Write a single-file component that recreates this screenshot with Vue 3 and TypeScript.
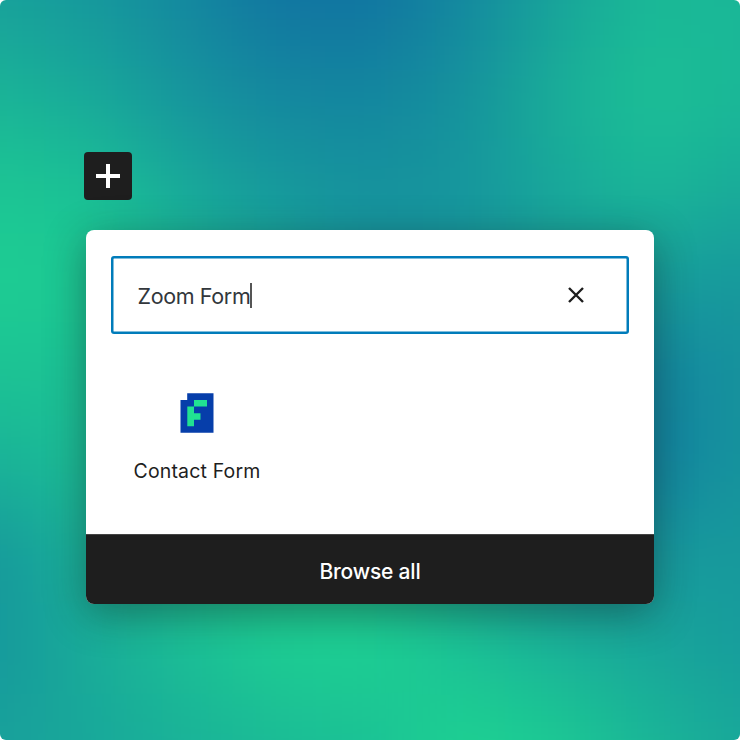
<script setup lang="ts">
import { ref } from 'vue'

type Rgb = [number, number, number]

const query = ref('Zoom Form')

// Backdrop tones on a 9 x 9 lattice: 0 is blue, 0.5 is teal, 1 is green.
const tones: number[][] = [
  [0.56, 0.46, 0.28, 0.06, 0.05, 0.28, 0.58, 0.78, 0.75],
  [0.74, 0.62, 0.42, 0.27, 0.24, 0.38, 0.68, 0.85, 0.77],
  [0.9, 0.85, 0.62, 0.46, 0.4, 0.44, 0.62, 0.77, 0.66],
  [0.97, 0.95, 0.78, 0.6, 0.42, 0.44, 0.53, 0.54, 0.48],
  [0.88, 0.87, 0.75, 0.6, 0.4, 0.3, 0.27, 0.22, 0.4],
  [0.72, 0.84, 0.78, 0.7, 0.6, 0.4, 0.27, 0.17, 0.42],
  [0.46, 0.72, 0.85, 0.92, 0.9, 0.7, 0.5, 0.47, 0.48],
  [0.46, 0.66, 0.83, 0.98, 1.0, 0.86, 0.72, 0.6, 0.52],
  [0.56, 0.62, 0.72, 0.8, 0.86, 1.02, 0.94, 0.76, 0.62],
]

const stops: Rgb[] = [
  [16, 112, 162],
  [23, 155, 156],
  [29, 208, 146],
]

function shade(tone: number): string {
  const index = tone < 0.5 ? 0 : 1
  const part = (tone - index * 0.5) * 2
  const from = stops[index]
  const to = stops[index + 1]
  const channels = from.map((value, i) => Math.round(value + (to[i] - value) * part))
  return `rgb(${channels.join(',')})`
}

const step = 92.5
// Edge tones repeat outwards so that the blur has colour beyond the frame.
const cells = Array.from({ length: 169 }, (_, n) => {
  const column = (n % 13) - 2
  const row = Math.floor(n / 13) - 2
  const clamp = (value: number) => Math.min(8, Math.max(0, value))
  return {
    x: (column - 0.5) * step,
    y: (row - 0.5) * step,
    fill: shade(tones[clamp(row)][clamp(column)]),
  }
})
</script>

<template>
  <main class="scene">
    <svg class="backdrop" viewBox="0 0 740 740" aria-hidden="true">
      <defs>
        <filter id="soften" filterUnits="userSpaceOnUse" x="-240" y="-240" width="1220" height="1220" color-interpolation-filters="sRGB">
          <feGaussianBlur stdDeviation="42" />
        </filter>
      </defs>
      <g filter="url(#soften)">
        <rect v-for="(cell, i) in cells" :key="i" :x="cell.x" :y="cell.y" width="93.5" height="93.5" :fill="cell.fill" />
      </g>
    </svg>

    <div class="content">
      <button class="add" type="button">
        <svg width="24" height="24" viewBox="0 0 24 24"><path d="M10 0h4v10h10v4H14v10h-4V14H0v-4h10z" fill="#fff" /></svg>
      </button>

      <section class="inserter">
        <div class="body">
          <div class="search">
            <span class="query">{{ query }}</span>
            <span class="caret"></span>
            <button class="clear" type="button">
              <svg width="16" height="16" viewBox="0 0 16 16"><path d="M1 1l14 14M15 1L1 15" fill="none" stroke="#1e1e1e" stroke-width="2.4" /></svg>
            </button>
          </div>
          <div class="block">
            <svg width="34" height="40" viewBox="0 0 34 40">
              <path d="M7.2 .3H33.5V39.7H.5V7H7.2z" fill="#063eaa" />
              <path d="M14 7h13v6.6H14zM7.3 13.6H14v6.6h6.5v6.6H14v6.5H7.3z" fill="#21e292" />
            </svg>
            <span class="name">Contact Form</span>
          </div>
        </div>
        <button class="browse" type="button">Browse all</button>
      </section>
    </div>
  </main>
</template>

<style>
body {
  background: #fff;
}
</style>

<style scoped>
.scene {
  display: grid;
  width: 740px;
  height: 740px;
  overflow: hidden;
  border-radius: 6px;
  font-family: Inter, "Liberation Sans", sans-serif;
}

.backdrop,
.content {
  grid-area: 1 / 1;
  width: 740px;
  height: 740px;
}

.content {
  z-index: 1;
  box-sizing: border-box;
  padding: 152px 86px 0 84px;
}

button {
  display: flex;
  align-items: center;
  justify-content: center;
  padding: 0;
  border: 0;
  font: inherit;
}

.add {
  width: 48px;
  height: 48px;
  border-radius: 4px;
  background: #1e1e1e;
}

.inserter {
  display: flex;
  flex-direction: column;
  width: 568px;
  height: 374px;
  margin: 30px 0 0 2px;
  overflow: hidden;
  border-radius: 8px;
  background: #fff;
  box-shadow: 0 10px 40px rgba(20, 30, 30, 0.42);
}

.body {
  flex: 1;
  padding: 26px 25px 0;
}

.search {
  display: flex;
  align-items: center;
  box-sizing: border-box;
  height: 78px;
  padding: 0 45px 0 26.5px;
  border-radius: 3px;
  box-shadow: inset 0 0 0 2.5px #007cba;
}

.query {
  padding-top: 1px;
  color: #32373c;
  font-size: 21.5px;
  line-height: 30px;
  letter-spacing: -0.37px;
  white-space: nowrap;
}

.caret {
  width: 2px;
  height: 25px;
  margin-left: -0.5px;
  background: #555;
}

.clear {
  margin-left: auto;
  background: none;
}

.block {
  display: flex;
  flex-direction: column;
  align-items: center;
  width: 172px;
  padding-top: 59px;
}

.name {
  margin-top: 25px;
  color: #1e1e1e;
  font-size: 19.5px;
  line-height: 26px;
  letter-spacing: 0.15px;
  white-space: nowrap;
}

.browse {
  box-sizing: border-box;
  height: 70px;
  padding-top: 3px;
  border-top: 1px solid #444;
  background: #1e1e1e;
  color: #fff;
  font-size: 21px;
  font-weight: 500;
  letter-spacing: -0.2px;
}
</style>
